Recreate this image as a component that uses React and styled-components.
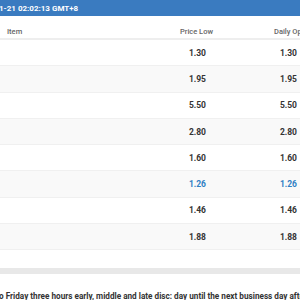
import React from 'react'
import styled, { createGlobalStyle } from 'styled-components'

const GlobalStyle = createGlobalStyle`
  html, body {
    margin: 0;
    padding: 0;
    background: #fff;
  }
  body {
    font-family: Roboto, "Liberation Sans", Arial, sans-serif;
    width: 300px;
    height: 300px;
    overflow: hidden;
  }
`

const rows = [
    { low: '1.30', open: '1.30' },
    { low: '1.95', open: '1.95' },
    { low: '5.50', open: '5.50' },
    { low: '2.80', open: '2.80' },
    { low: '1.60', open: '1.60' },
    { low: '1.26', open: '1.26', up: true },
    { low: '1.46', open: '1.46' },
    { low: '1.88', open: '1.88' },
]

function App() {
  return (
    <Page>
        <GlobalStyle />
        <TitleBar>
            <Stamp>1-21 02:02:13 GMT+8</Stamp>
        </TitleBar>
        <Table>
            <HeadRow>
                <HeadCell>Item</HeadCell>
                <HeadCell $right>Price Low</HeadCell>
                <HeadCell $open>Daily Open</HeadCell>
            </HeadRow>
            {rows.map((row, i) => (
                <Row key={i} $alt={i % 2 === 1}>
                    <Cell />
                    <Cell $up={row.up}>{row.low}</Cell>
                    <Cell $up={row.up} $last>{row.open}</Cell>
                </Row>
            ))}
        </Table>
        <Scrollbar />
        <Note>o Friday three hours early, middle and late disc: day until the next business day after the holiday</Note>
    </Page>
  )
}

const Page = styled.div`
    width: 300px;
    height: 300px;
    overflow: hidden;
`

const TitleBar = styled.div`
    height: 16px;
    background: #3a7bc0;
    display: flex;
    align-items: center;
`

const Stamp = styled.span`
    color: #fff;
    font-size: 8px;
    font-weight: 700;
    white-space: nowrap;
    margin-left: -1px;
`

const Table = styled.div`
    width: 340px;
`

const HeadRow = styled.div`
    box-sizing: border-box;
    display: grid;
    grid-template-columns: 130px 85px 125px;
    height: 24px;
    align-items: end;
    padding-bottom: 2px;
    border-bottom: 2px solid #eeeeee;
`

const HeadCell = styled.div`
    font-size: 7.5px;
    font-weight: 500;
    color: #666;
    white-space: nowrap;
    padding-left: ${p => p.$right ? '0' : p.$open ? '59px' : '7px'};
    padding-right: ${p => p.$right ? '2px' : '0'};
    text-align: ${p => p.$right ? 'right' : 'left'};
`

const Row = styled.div`
    box-sizing: border-box;
    display: grid;
    grid-template-columns: 130px 85px 125px;
    height: 26.3px;
    align-items: center;
    border-bottom: 1px solid #f0f0f0;
    background: ${p => p.$alt ? '#f9f9f9' : '#fff'};
`

const Cell = styled.div`
    font-size: 8.5px;
    font-weight: 700;
    color: ${p => p.$up ? '#2f7fc4' : '#333'};
    text-align: right;
    padding-right: ${p => p.$last ? '43px' : '9px'};
`

const Scrollbar = styled.div`
    margin-top: 18px;
    height: 6px;
    background: #e8e8e8;
`

const Note = styled.div`
    margin-top: 17px;
    font-size: 8.2px;
    font-weight: 700;
    color: #333;
    white-space: nowrap;
    margin-left: -1px;
`

export default App
